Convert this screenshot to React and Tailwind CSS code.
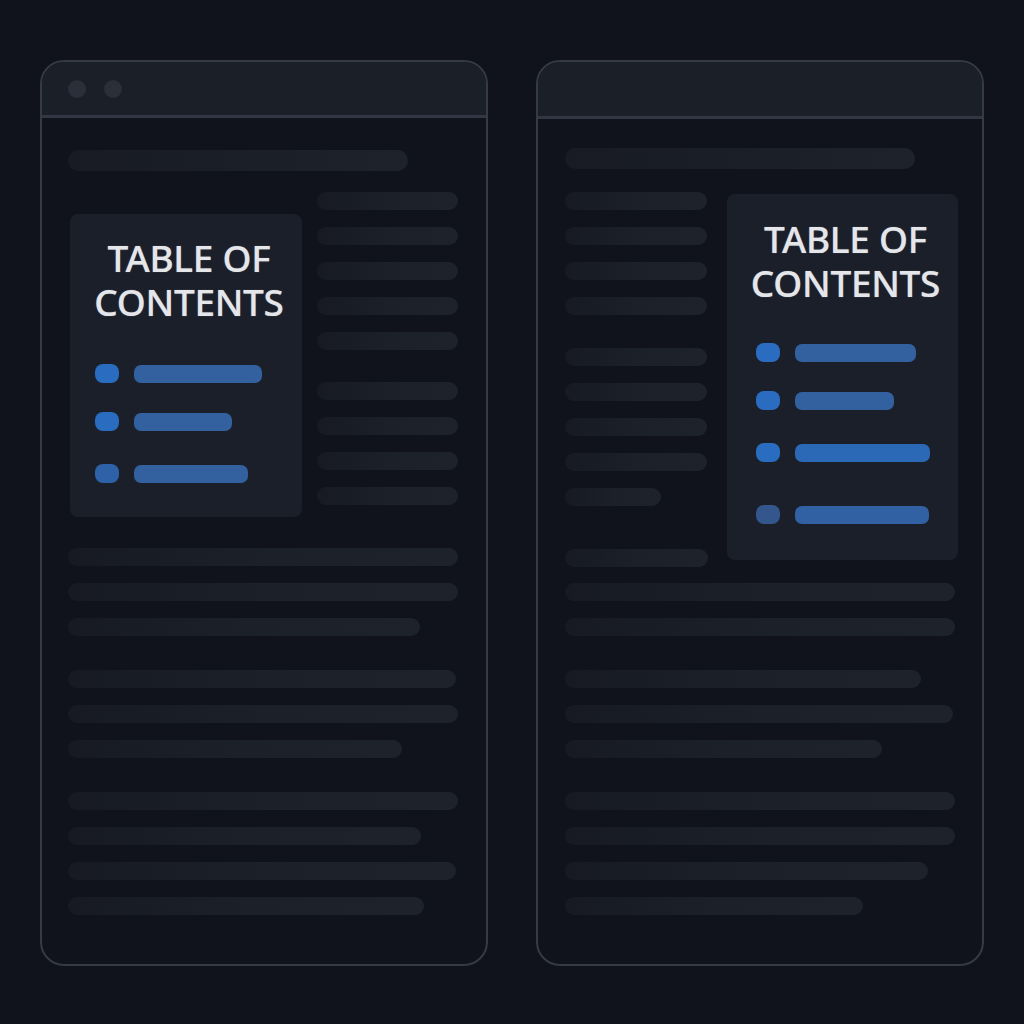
import React from "react";

const Line = ({ w, mt = "" }) => (
  <div
    className={`h-[18px] ${w} ${mt} shrink-0 rounded-full bg-gradient-to-r from-[#171a23] via-[#1c2029] to-[#1e222b] blur-[0.6px]`}
  />
);

const TocTitle = ({ pt }) => (
  <div
    className={`${pt} text-center text-[37px] font-medium tracking-[-0.3px] text-[#e4e6ea]`}
    style={{ fontFamily: '"Noto Sans", "Open Sans", sans-serif', textShadow: "0 0 1px #8a909c" }}
  >
    <div className="h-[44px] leading-[44px]">TABLE OF</div>
    <div className="h-[44px] leading-[44px]">CONTENTS</div>
  </div>
);

const Item = ({ bar, dot = "bg-[#2a6cbf]", barColor = "bg-[#33609f]", mt = "" }) => (
  <div className={`flex items-center gap-[15px] ${mt}`}>
    <div className={`h-[19px] w-[24px] rounded-[8px] ${dot}`} />
    <div className={`h-[18px] ${bar} rounded-[7px] ${barColor}`} />
  </div>
);

export default function App() {
  return (
    <div className="min-h-[1024px] w-[1024px] bg-[#10131c] pt-[60px] pl-[40px]">
      <div className="flex gap-[48px]">
        {/* Left window */}
        <div className="flex h-[906px] w-[448px] flex-col overflow-hidden rounded-[24px] border-2 border-[#353a45] bg-[#10131c]">
          <div className="flex h-[56px] shrink-0 items-center gap-[18px] border-b-[3px] border-[#323743] bg-[#1b1f28] pl-[26px] pt-[1px]">
            <div className="h-[18px] w-[18px] rounded-full bg-[#2a2f3a]" />
            <div className="h-[18px] w-[18px] rounded-full bg-[#2a2f3a]" />
          </div>
          <div className="flex flex-col pl-[26px]">
            <div className="mt-[32px] h-[21px] w-[340px] rounded-full bg-gradient-to-r from-[#181b24] to-[#1e222b] blur-[0.6px]" />
            <div className="mt-[21px] flex">
              <div className="ml-[2px] mt-[22px] h-[303px] w-[232px] rounded-[8px] bg-[#1b1f29] pl-[25px]">
                <div className="-ml-[25px] pl-[6px]">
                  <TocTitle pt="pt-[22px]" />
                </div>
                <Item bar="w-[128px]" mt="mt-[40px]" />
                <Item bar="w-[98px]" mt="mt-[29px]" />
                <Item bar="w-[114px]" mt="mt-[33px]" dot="bg-[#2e62a8]" />
              </div>
              <div className="ml-[15px] flex flex-col gap-[17px]">
                <Line w="w-[141px]" />
                <Line w="w-[141px]" />
                <Line w="w-[141px]" />
                <Line w="w-[141px]" />
                <Line w="w-[141px]" />
                <Line w="w-[141px]" mt="mt-[15px]" />
                <Line w="w-[141px]" />
                <Line w="w-[141px]" />
                <Line w="w-[141px]" />
              </div>
            </div>
            <div className="mt-[31px] flex flex-col gap-[17px]">
              <Line w="w-[390px]" />
              <Line w="w-[390px]" />
              <Line w="w-[352px]" />
              <Line w="w-[388px]" mt="mt-[17px]" />
              <Line w="w-[390px]" />
              <Line w="w-[334px]" />
              <Line w="w-[390px]" mt="mt-[17px]" />
              <Line w="w-[353px]" />
              <Line w="w-[388px]" />
              <Line w="w-[356px]" />
            </div>
          </div>
        </div>

        {/* Right window */}
        <div className="flex h-[906px] w-[448px] flex-col overflow-hidden rounded-[24px] border-2 border-[#353a45] bg-[#10131c]">
          <div className="h-[57px] shrink-0 border-b-[3px] border-[#323743] bg-[#1b1f28]" />
          <div className="flex flex-col pl-[27px]">
            <div className="mt-[29px] h-[21px] w-[350px] rounded-full bg-gradient-to-r from-[#181b24] to-[#1e222b] blur-[0.6px]" />
            <div className="mt-[23px] flex">
              <div className="flex flex-col gap-[17px]">
                <Line w="w-[142px]" />
                <Line w="w-[142px]" />
                <Line w="w-[142px]" />
                <Line w="w-[142px]" />
                <Line w="w-[142px]" mt="mt-[16px]" />
                <Line w="w-[142px]" />
                <Line w="w-[142px]" />
                <Line w="w-[142px]" />
                <Line w="w-[96px]" />
                <Line w="w-[143px]" mt="mt-[26px]" />
              </div>
              <div className="ml-[19px] mt-[2px] h-[366px] w-[231px] rounded-[8px] bg-[#1b1f29] pl-[29px]">
                <div className="-ml-[29px] pl-[6px]">
                  <TocTitle pt="pt-[23px]" />
                </div>
                <Item bar="w-[121px]" mt="mt-[38px]" />
                <Item bar="w-[99px]" mt="mt-[29px]" />
                <Item bar="w-[135px]" mt="mt-[33px]" barColor="bg-[#2b68b6]" />
                <Item bar="w-[134px]" mt="mt-[43px]" dot="bg-[#33578c]" barColor="bg-[#3261a3]" />
              </div>
            </div>
            <div className="mt-[16px] flex flex-col gap-[17px]">
              <Line w="w-[390px]" />
              <Line w="w-[390px]" />
              <Line w="w-[356px]" mt="mt-[17px]" />
              <Line w="w-[388px]" />
              <Line w="w-[317px]" />
              <Line w="w-[390px]" mt="mt-[17px]" />
              <Line w="w-[390px]" />
              <Line w="w-[363px]" />
              <Line w="w-[298px]" />
            </div>
          </div>
        </div>
      </div>
    </div>
  );
}
